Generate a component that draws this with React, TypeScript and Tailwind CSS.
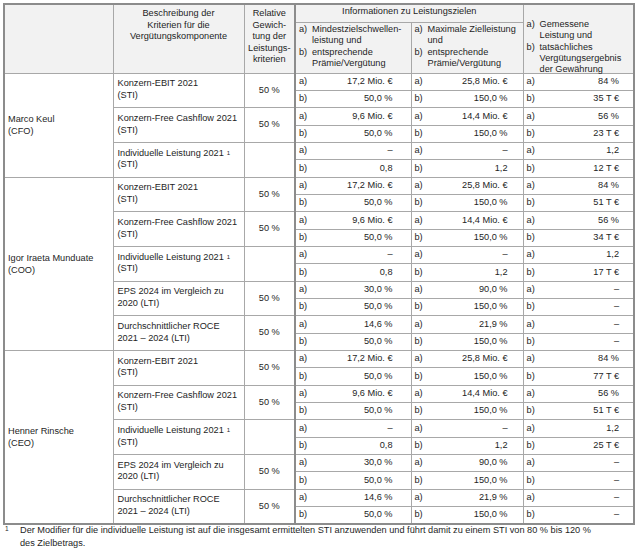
type Triple = [string, string, string];

interface Criterion {
  title: string;
  sub: string;
  sup?: boolean;
  weight?: string;
  a: Triple;
  b: Triple;
}

interface Person {
  name: string;
  role: string;
  criteria: Criterion[];
}

const EBIT = (pa: string, pb: string): Criterion => ({
  title: "Konzern-EBIT 2021",
  sub: "(STI)",
  weight: "50 %",
  a: ["17,2 Mio. €", "25,8 Mio. €", pa],
  b: ["50,0 %", "150,0 %", pb],
});

const CASHFLOW = (pb: string): Criterion => ({
  title: "Konzern-Free Cashflow 2021",
  sub: "(STI)",
  weight: "50 %",
  a: ["9,6 Mio. €", "14,4 Mio. €", "56 %"],
  b: ["50,0 %", "150,0 %", pb],
});

const INDIVIDUAL = (pb: string): Criterion => ({
  title: "Individuelle Leistung 2021",
  sub: "(STI)",
  sup: true,
  a: ["–", "–", "1,2"],
  b: ["0,8", "1,2", pb],
});

const EPS: Criterion = {
  title: "EPS 2024 im Vergleich zu",
  sub: "2020 (LTI)",
  weight: "50 %",
  a: ["30,0 %", "90,0 %", "–"],
  b: ["50,0 %", "150,0 %", "–"],
};

const ROCE: Criterion = {
  title: "Durchschnittlicher ROCE",
  sub: "2021 – 2024 (LTI)",
  weight: "50 %",
  a: ["14,6 %", "21,9 %", "–"],
  b: ["50,0 %", "150,0 %", "–"],
};

const PEOPLE: Person[] = [
  {
    name: "Marco Keul",
    role: "(CFO)",
    criteria: [EBIT("84 %", "35 T €"), CASHFLOW("23 T €"), INDIVIDUAL("12 T €")],
  },
  {
    name: "Igor Iraeta Munduate",
    role: "(COO)",
    criteria: [EBIT("84 %", "51 T €"), CASHFLOW("34 T €"), INDIVIDUAL("17 T €"), EPS, ROCE],
  },
  {
    name: "Henner Rinsche",
    role: "(CEO)",
    criteria: [EBIT("84 %", "77 T €"), CASHFLOW("51 T €"), INDIVIDUAL("25 T €"), EPS, ROCE],
  },
];

// value column paddings: a)/b) label left, value right-aligned
const VALUE_PAD = ["pl-[3px] pr-[18px]", "pl-[3px] pr-[15px]", "pl-[3px] pr-[14px]"];

const cell = "border border-[#a8a8a8] p-0";

export default function App() {
  return (
    <div className="w-[637px] h-[549px] bg-white pt-[3px] pl-[3px] font-['Liberation_Sans',Arial,sans-serif] text-[9.2px] leading-[11.6px] text-[#1e1e1e]">
      <table className="table-fixed border-collapse w-[630px] border-2 border-[#8c8c8c]">
        <colgroup>
          <col className="w-[109px]" />
          <col className="w-[131px]" />
          <col className="w-[51px]" />
          <col className="w-[116px]" />
          <col className="w-[112px]" />
          <col className="w-[111px]" />
        </colgroup>
        <thead className="bg-[#f2f2f2]">
          <tr className="h-[18px]">
            <th rowSpan={2} className={`${cell} font-normal`} />
            <th rowSpan={2} className={`${cell} align-top font-normal pt-[3px] text-center`}>
              <div className="h-[60px]">
                Beschreibung der
                <br />
                Kriterien für die
                <br />
                Vergütungskomponente
              </div>
            </th>
            <th rowSpan={2} className={`${cell} align-top font-normal pt-[3px] text-center border-r-2 border-r-[#8c8c8c]`}>
              <div className="h-[60px]">
                Relative
                <br />
                Gewich-
                <br />
                tung der
                <br />
                Leistungs-
                <br />
                kriterien
              </div>
            </th>
            <th colSpan={2} className={`${cell} font-normal text-center align-middle pb-[2px]`}>
              Informationen zu Leistungszielen
            </th>
            <th rowSpan={2} className={`${cell} align-top font-normal text-left pt-[14px] pl-[3px]`}>
              <div className="h-[50px] leading-[11.25px]">
                <HangingList
                  a={["Gemessene", "Leistung und"]}
                  b={["tatsächliches", "Vergütungsergebnis", "der Gewährung"]}
                />
              </div>
            </th>
          </tr>
          <tr className="h-[51px]">
            <th className={`${cell} align-top font-normal text-left pl-[3px] pt-[1px]`}>
              <div className="h-[48px]">
                <HangingList a={["Mindestzielschwellen-", "leistung und"]} b={["entsprechende", "Prämie/Vergütung"]} />
              </div>
            </th>
            <th className={`${cell} align-top font-normal text-left pl-[3px] pt-[1px]`}>
              <div className="h-[48px]">
                <HangingList a={["Maximale Zielleistung", "und"]} b={["entsprechende", "Prämie/Vergütung"]} />
              </div>
            </th>
          </tr>
        </thead>
        <tbody>
          {PEOPLE.map((p) =>
            p.criteria.map((c, ci) => (
              <PersonRows key={`${p.name}-${ci}`} person={p} crit={c} first={ci === 0} />
            ))
          )}
        </tbody>
      </table>

      {/* Footnote */}
      <div className="flex w-[625px] mt-[-1px] leading-[13.5px]">
        <span className="w-[17px] shrink-0 pl-[2px] text-[6.5px] leading-[9px]">1</span>
        <p>
          Der Modifier für die individuelle Leistung ist auf die insgesamt ermittelten STI anzuwenden und führt damit zu
          einem STI von 80 % bis 120 %
          <br />
          des Zielbetrags.
        </p>
      </div>
    </div>
  );
}

// ─── Sub-components ───────────────────────────────────────────────────────────

function PersonRows({ person, crit, first }: { person: Person; crit: Criterion; first: boolean }) {
  return (
    <>
      <tr className="h-[17.35px]">
        {first && (
          <td rowSpan={person.criteria.length * 2} className={`${cell} align-middle pl-[3px] pt-[2px]`}>
            {person.name}
            <br />
            {person.role}
          </td>
        )}
        <td rowSpan={2} className={`${cell} align-middle pl-[4px] pb-[1px]`}>
          {crit.title}
          {crit.sup && <sup className="text-[6px] relative -top-[1px] ml-[3px]">1</sup>}
          <br />
          {crit.sub}
        </td>
        <td rowSpan={2} className={`${cell} align-middle text-center border-r-2 border-r-[#8c8c8c]`}>
          {crit.weight ?? ""}
        </td>
        {crit.a.map((v, i) => (
          <ValueCell key={i} label="a)" value={v} pad={VALUE_PAD[i]} />
        ))}
      </tr>
      <tr className="h-[17.35px]">
        {crit.b.map((v, i) => (
          <ValueCell key={i} label="b)" value={v} pad={VALUE_PAD[i]} />
        ))}
      </tr>
    </>
  );
}

function ValueCell({ label, value, pad }: { label: string; value: string; pad: string }) {
  return (
    <td className={`${cell} align-middle`}>
      <div className={`flex justify-between ${pad}`}>
        <span>{label}</span>
        <span>{value}</span>
      </div>
    </td>
  );
}

function HangingList({ a, b }: { a: string[]; b: string[] }) {
  return (
    <div className="grid grid-cols-[13px_1fr]">
      <span>a)</span>
      <span>
        {a.map((l, i) => (
          <span key={i} className="block">
            {l}
          </span>
        ))}
      </span>
      <span>b)</span>
      <span>
        {b.map((l, i) => (
          <span key={i} className="block">
            {l}
          </span>
        ))}
      </span>
    </div>
  );
}
